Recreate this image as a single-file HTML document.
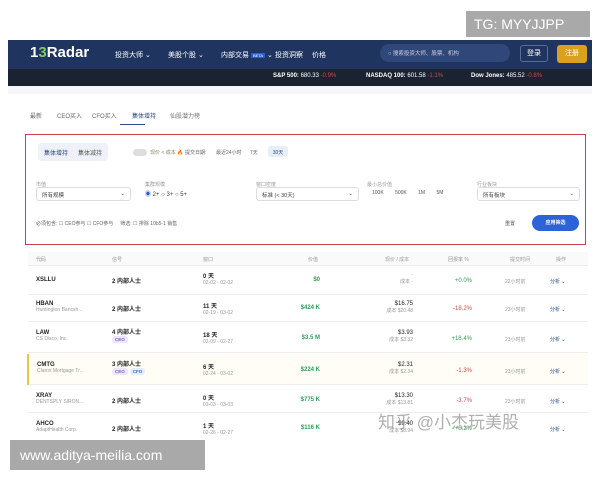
<!DOCTYPE html>
<html><head><meta charset="utf-8"><style>
*{margin:0;padding:0;box-sizing:border-box}
body{width:600px;height:480px;background:#fff;font-family:"Liberation Sans","Noto Sans CJK SC",sans-serif;position:relative;overflow:hidden;color:#222}
.a{position:absolute;white-space:nowrap}
.nav{left:8px;top:40px;width:584px;height:29px;background:#1f3560}
.tick{left:8px;top:69px;width:584px;height:17px;background:#1b2332}
.w{color:#fff}
.s7{font-size:7px}.s6{font-size:6px}.s5{font-size:5px}
.red{color:#c94a4a}.grn{color:#2e9c5a}.gr{color:#999}
.r{text-align:right}
.row{position:absolute;left:28px;width:560px;border-bottom:1px solid #eee}
.tag{display:inline-block;font-size:4.5px;padding:1px 3px;border-radius:3px;background:#ece6f7;color:#7a5fb0;margin-right:2px}
.sel{position:absolute;height:14px;border:1px solid #ddd;border-radius:3px;font-size:5.5px;padding:3px 5px;color:#444}
</style></head><body>
<div class="a" style="left:466px;top:11px;width:124px;height:26px;background:#a9a9a9;color:#fff;font-size:14px;line-height:26px;padding-left:8px">TG: MYYJJPP</div>
<div class="a nav"></div>
<div class="a tick"></div>
<div class="a w" style="left:30px;top:44px;font-size:15px;font-weight:bold">1<span style="color:#7fc86a">3</span>Radar</div>
<div class="a w s7" style="left:115px;top:50px">投资大师 ⌄</div>
<div class="a w s7" style="left:168px;top:50px">美股个股 ⌄</div>
<div class="a w s7" style="left:221px;top:50px">内部交易 <span style="background:#2d5bd8;font-size:4px;padding:0 2px">BETA</span> ⌄</div>
<div class="a w s7" style="left:275px;top:50px">投资洞察</div>
<div class="a w s7" style="left:312px;top:50px">价格</div>
<div class="a" style="left:380px;top:44px;width:130px;height:18px;border-radius:9px;background:#30477a;color:#ccd;font-size:5.5px;padding:5px 8px">○ 搜索投资大师、股票、机构</div>
<div class="a w s7" style="left:520px;top:45px;width:28px;height:17px;border:1px solid #5a6d95;border-radius:3px;text-align:center;line-height:15px">登录</div>
<div class="a w s7" style="left:557px;top:45px;width:30px;height:18px;background:#d9a21e;border-radius:3px;text-align:center;line-height:18px">注册</div>
<div class="a w s6" style="left:273px;top:73px"><b>S&amp;P 500:</b> 680.33 <span class="red">-0.9%</span></div>
<div class="a w s6" style="left:366px;top:73px"><b>NASDAQ 100:</b> 601.58 <span class="red">-1.1%</span></div>
<div class="a w s6" style="left:471px;top:73px"><b>Dow Jones:</b> 485.52 <span class="red">-0.8%</span></div>
<div class="a" style="left:8px;top:86px;width:584px;height:8px;background:#f6f7f9"></div>
<div class="a s6" style="left:30px;top:111px;color:#666">最新</div>
<div class="a s6" style="left:57px;top:111px;color:#666">CEO买入</div>
<div class="a s6" style="left:92px;top:111px;color:#666">CFO买入</div>
<div class="a s6" style="left:132px;top:111px;color:#2a4a80">集体增持</div>
<div class="a" style="left:120px;top:124px;width:25px;height:1px;background:#2a4a80"></div>
<div class="a s6" style="left:170px;top:111px;color:#777">仙股潜力榜</div>
<div class="a" style="left:25px;top:134px;width:561px;height:111px;border:1.5px solid #c8404a"></div>
<div class="a" style="left:38px;top:143px;width:70px;height:18px;background:#eef2f8;border-radius:4px"></div>
<div class="a s6" style="left:44px;top:148px;color:#2a4a80">集体增持</div>
<div class="a s6" style="left:78px;top:148px;color:#555">集体减持</div>
<div class="a" style="left:133px;top:149px;width:14px;height:7px;border-radius:4px;background:#ddd"></div>
<div class="a s5" style="left:150px;top:149px;color:#886">现价 &lt; 成本 🔥</div>
<div class="a s5" style="left:185px;top:149px;color:#666">提交日期:</div>
<div class="a s5" style="left:216px;top:149px;color:#666">最近24小时</div>
<div class="a s5" style="left:250px;top:149px;color:#666">7天</div>
<div class="a s5" style="left:268px;top:146px;width:20px;height:11px;background:#e6eef8;border-radius:3px;padding-top:3px;text-align:center;color:#2a4a80">30天</div>
<div class="a s5 gr" style="left:36px;top:181px">市值</div>
<div class="sel" style="left:36px;top:187px;width:95px">所有规模<span style="float:right">⌄</span></div>
<div class="a s5 gr" style="left:145px;top:181px">集群规模</div>
<div class="a s6" style="left:145px;top:189px;color:#444"><span style="color:#2d5bd8">◉</span> 2+ ○ 3+ ○ 5+</div>
<div class="a s5 gr" style="left:256px;top:181px">窗口密度</div>
<div class="sel" style="left:256px;top:187px;width:103px">标准 (&lt; 30天)<span style="float:right">⌄</span></div>
<div class="a s5 gr" style="left:367px;top:181px">最小总价值</div>
<div class="a s5" style="left:372px;top:190px;color:#555;word-spacing:10px">100K 500K 1M 5M</div>
<div class="a s5 gr" style="left:477px;top:181px">行业板块</div>
<div class="sel" style="left:477px;top:187px;width:103px">所有板块<span style="float:right">⌄</span></div>
<div class="a s5" style="left:36px;top:220px;color:#666">必须包含: ☐ CEO参与 ☐ CFO参与 &nbsp;&nbsp;&nbsp; 筛选: ☐ 排除 10b5-1 销售</div>
<div class="a s5" style="left:505px;top:220px;color:#555">重置</div>
<div class="a w s5" style="left:532px;top:215px;width:47px;height:16px;background:#2d63d8;border-radius:8px;text-align:center;line-height:16px;font-weight:bold">应用筛选</div>
<div class="a" style="left:28px;top:252px;width:560px;height:14px;background:#fafafa;border-bottom:1px solid #eee"></div>
<div class="a s5 gr" style="left:36px;top:256px">代码</div>
<div class="a s5 gr" style="left:112px;top:256px">信号</div>
<div class="a s5 gr" style="left:203px;top:256px">窗口</div>
<div class="a s5 gr" style="left:308px;top:256px">价值</div>
<div class="a s5 gr" style="left:385px;top:256px">现价 / 成本</div>
<div class="a s5 gr" style="left:448px;top:256px">回报率 %</div>
<div class="a s5 gr" style="left:510px;top:256px">提交时间</div>
<div class="a s5 gr" style="left:556px;top:256px">操作</div>
<div class="row" style="top:266px;height:29px"></div>
<div class="row" style="top:295px;height:27px"></div>
<div class="row" style="top:322px;height:31px"></div>
<div class="row" style="top:353px;height:32px;background:#fffdf5"></div>
<div class="a" style="left:27px;top:354px;width:2px;height:31px;background:#e7c64a"></div>
<div class="row" style="top:385px;height:28px"></div>
<!-- rows -->
<div class="a s6" style="left:36px;top:277px;font-weight:bold">XSLLU</div>
<div class="a s6" style="left:112px;top:276px;font-weight:bold">2 内部人士</div>
<div class="a s6" style="left:203px;top:271px;font-weight:bold">0 天<br><span class="gr s5" style="font-weight:normal">02-02 - 02-02</span></div>
<div class="a s6 grn r" style="left:280px;width:40px;top:277px;font-weight:bold">$0</div>
<div class="a s5 r gr" style="left:370px;width:43px;top:272px">-<br>成本 -</div>
<div class="a s6 grn r" style="left:430px;width:42px;top:278px">+0.0%</div>
<div class="a s5 gr" style="left:505px;top:278px">22小时前</div>
<div class="a s5" style="left:550px;top:278px;color:#2a4a80">分析 ⌄</div>

<div class="a s6" style="left:36px;top:301px;font-weight:bold">HBAN<br><span class="gr s5" style="font-weight:normal">Huntington Bancsh...</span></div>
<div class="a s6" style="left:112px;top:304px;font-weight:bold">2 内部人士</div>
<div class="a s6" style="left:203px;top:301px;font-weight:bold">11 天<br><span class="gr s5" style="font-weight:normal">02-19 - 03-02</span></div>
<div class="a s6 grn r" style="left:280px;width:40px;top:305px;font-weight:bold">$424 K</div>
<div class="a s6 r" style="left:360px;width:53px;top:301px">$16.75<br><span class="gr s5">成本 $20.48</span></div>
<div class="a s6 red r" style="left:430px;width:42px;top:306px">-18.2%</div>
<div class="a s5 gr" style="left:505px;top:306px">23小时前</div>
<div class="a s5" style="left:550px;top:306px;color:#2a4a80">分析 ⌄</div>

<div class="a s6" style="left:36px;top:330px;font-weight:bold">LAW<br><span class="gr s5" style="font-weight:normal">CS Disco, Inc.</span></div>
<div class="a s6" style="left:112px;top:327px;font-weight:bold">4 内部人士<br><span class="tag">CEO</span></div>
<div class="a s6" style="left:203px;top:330px;font-weight:bold">18 天<br><span class="gr s5" style="font-weight:normal">02-09 - 02-27</span></div>
<div class="a s6 grn r" style="left:280px;width:40px;top:335px;font-weight:bold">$3.5 M</div>
<div class="a s6 r" style="left:360px;width:53px;top:330px">$3.93<br><span class="gr s5">成本 $3.32</span></div>
<div class="a s6 grn r" style="left:430px;width:42px;top:336px">+18.4%</div>
<div class="a s5 gr" style="left:505px;top:336px">23小时前</div>
<div class="a s5" style="left:550px;top:336px;color:#2a4a80">分析 ⌄</div>

<div class="a s6" style="left:37px;top:362px;font-weight:bold">CMTG<br><span class="gr s5" style="font-weight:normal">Claros Mortgage Tr...</span></div>
<div class="a s6" style="left:112px;top:359px;font-weight:bold">3 内部人士<br><span class="tag">CEO</span><span class="tag" style="background:#e3eefa;color:#3a6bb0">CFO</span></div>
<div class="a s6" style="left:203px;top:362px;font-weight:bold">6 天<br><span class="gr s5" style="font-weight:normal">02-24 - 03-02</span></div>
<div class="a s6 grn r" style="left:280px;width:40px;top:367px;font-weight:bold">$224 K</div>
<div class="a s6 r" style="left:360px;width:53px;top:362px">$2.31<br><span class="gr s5">成本 $2.34</span></div>
<div class="a s6 red r" style="left:430px;width:42px;top:368px">-1.3%</div>
<div class="a s5 gr" style="left:505px;top:368px">23小时前</div>
<div class="a s5" style="left:550px;top:368px;color:#2a4a80">分析 ⌄</div>

<div class="a s6" style="left:36px;top:393px;font-weight:bold">XRAY<br><span class="gr s5" style="font-weight:normal">DENTSPLY SIRON...</span></div>
<div class="a s6" style="left:112px;top:396px;font-weight:bold">2 内部人士</div>
<div class="a s6" style="left:203px;top:393px;font-weight:bold">0 天<br><span class="gr s5" style="font-weight:normal">03-03 - 03-03</span></div>
<div class="a s6 grn r" style="left:280px;width:40px;top:397px;font-weight:bold">$775 K</div>
<div class="a s6 r" style="left:360px;width:53px;top:393px">$13.30<br><span class="gr s5">成本 $13.81</span></div>
<div class="a s6 red r" style="left:430px;width:42px;top:398px">-3.7%</div>
<div class="a s5 gr" style="left:505px;top:398px">23小时前</div>
<div class="a s5" style="left:550px;top:398px;color:#2a4a80">分析 ⌄</div>

<div class="a s6" style="left:36px;top:421px;font-weight:bold">AHCO<br><span class="gr s5" style="font-weight:normal">AdaptHealth Corp.</span></div>
<div class="a s6" style="left:112px;top:424px;font-weight:bold">2 内部人士</div>
<div class="a s6" style="left:203px;top:421px;font-weight:bold">1 天<br><span class="gr s5" style="font-weight:normal">02-26 - 02-27</span></div>
<div class="a s6 grn r" style="left:280px;width:40px;top:425px;font-weight:bold">$116 K</div>
<div class="a s6 r" style="left:360px;width:53px;top:421px">$9.40<br><span class="gr s5">成本 $8.94</span></div>
<div class="a s6 grn r" style="left:430px;width:42px;top:426px">+5.2%</div>
<div class="a s5" style="left:550px;top:426px;color:#2a4a80">分析 ⌄</div>
<div class="a" style="left:378px;top:408px;font-size:17px;color:rgba(150,150,150,.75)">知乎 @小杰玩美股</div>
<div class="a" style="left:10px;top:440px;width:195px;height:30px;background:#a9a9a9;color:#fff;font-size:14px;line-height:30px;padding-left:10px">www.aditya-meilia.com</div>
</body></html>
